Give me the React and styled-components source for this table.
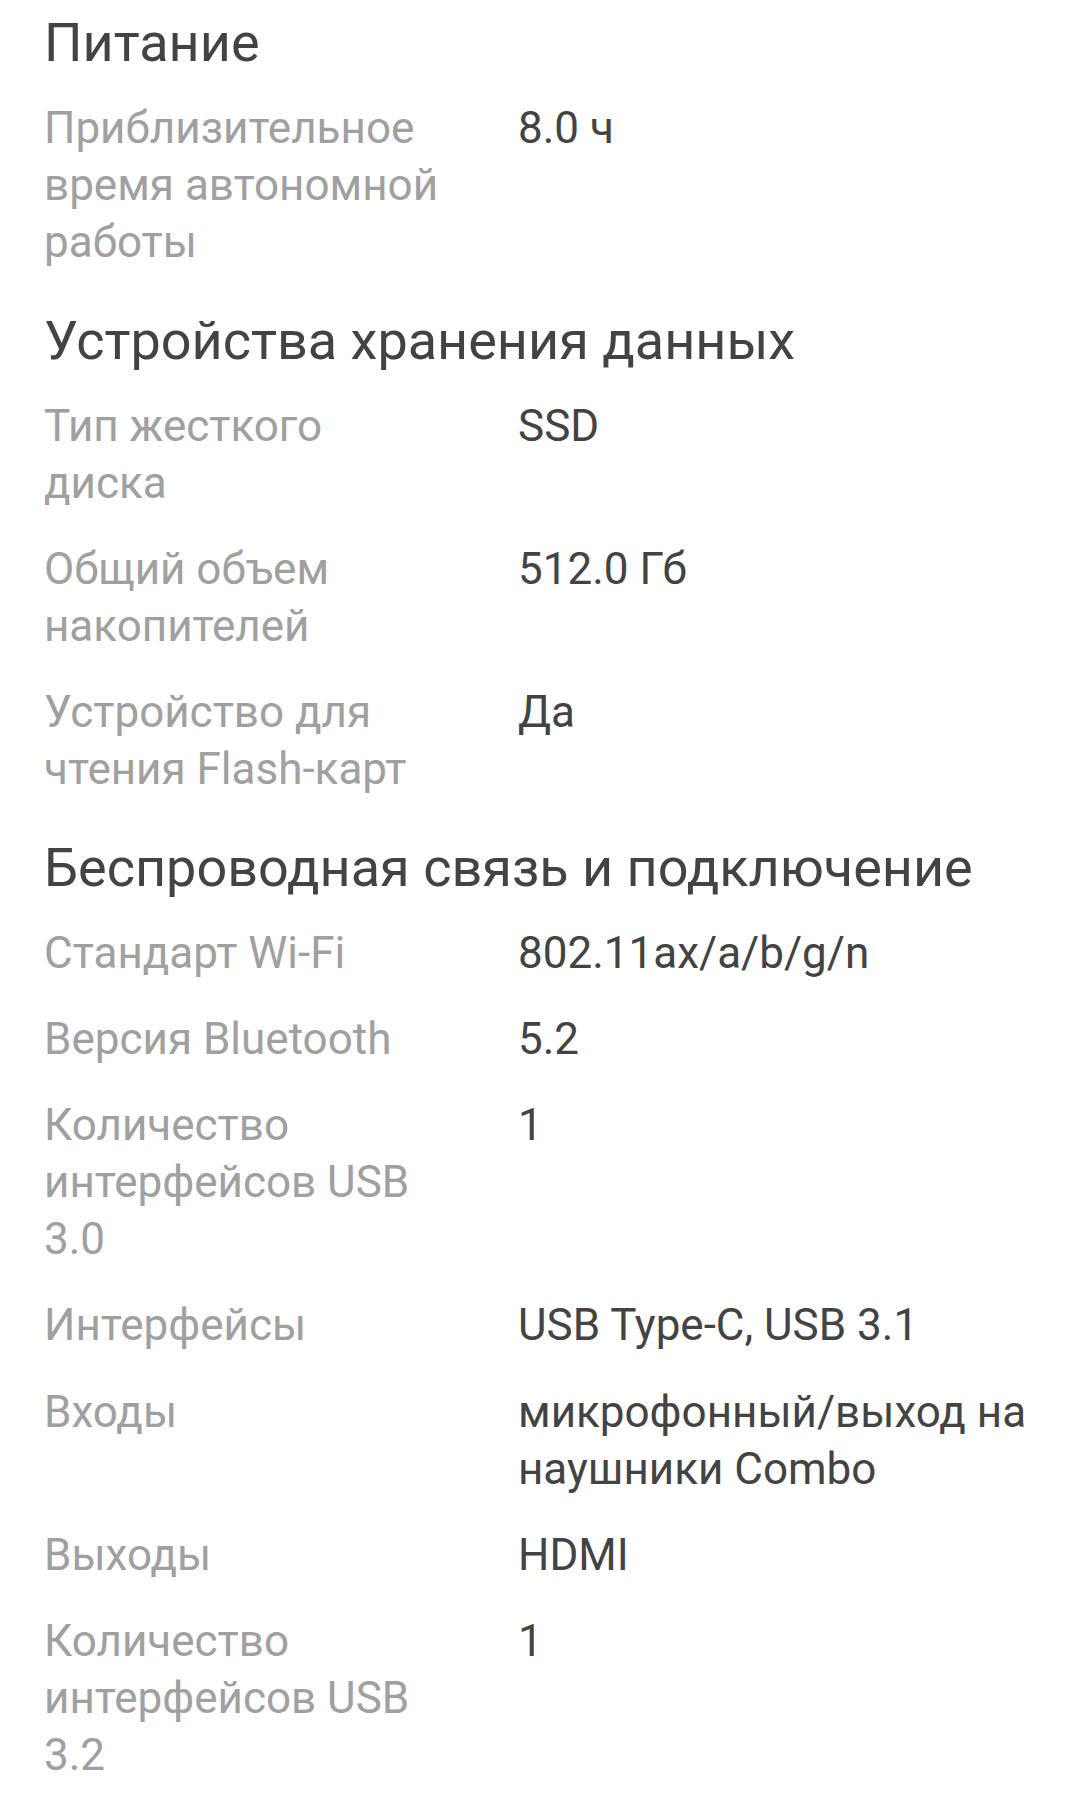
import React from "react";
import styled, { createGlobalStyle } from "styled-components";

const GlobalStyle = createGlobalStyle`
  html, body {
    margin: 0;
    padding: 0;
    background: #ffffff;
  }
  body {
    font-family: Roboto, "Noto Sans", "Liberation Sans", sans-serif;
    -webkit-font-smoothing: antialiased;
  }
`;

const Page = styled.main`
  width: 1080px;
  box-sizing: border-box;
  padding: 8px 43px 40px 44px;
  display: flex;
  flex-direction: column;
  gap: 34.5px;
  background: #ffffff;
`;

const Section = styled.section`
  display: flex;
  flex-direction: column;
`;

const Heading = styled.h2`
  margin: 0 0 22px;
  font-size: 54px;
  line-height: 70px;
  font-weight: 400;
  color: #434343;
  letter-spacing: 0;
`;

const Rows = styled.dl`
  margin: 0;
  display: flex;
  flex-direction: column;
  gap: 29.3px;
`;

const Row = styled.div`
  display: grid;
  grid-template-columns: 474px 1fr;
`;

const Label = styled.dt`
  margin: 0;
  padding-right: 68px;
  font-size: 44px;
  line-height: 57px;
  color: #a0a0a0;
`;

const Value = styled.dd`
  margin: 0;
  font-size: 44px;
  line-height: 57px;
  color: #434343;
`;

const sections = [
  {
    title: "Питание",
    rows: [["Приблизительное время автономной работы", "8.0 ч"]],
  },
  {
    title: "Устройства хранения данных",
    rows: [
      ["Тип жесткого диска", "SSD"],
      ["Общий объем накопителей", "512.0 Гб"],
      ["Устройство для чтения Flash-карт", "Да"],
    ],
  },
  {
    title: "Беспроводная связь и подключение",
    rows: [
      ["Стандарт Wi-Fi", "802.11ax/a/b/g/n"],
      ["Версия Bluetooth", "5.2"],
      ["Количество интерфейсов USB 3.0", "1"],
      ["Интерфейсы", "USB Type-C, USB 3.1"],
      ["Входы", "микрофонный/выход на наушники Combo"],
      ["Выходы", "HDMI"],
      ["Количество интерфейсов USB 3.2", "1"],
    ],
  },
];

export default function App() {
  return (
    <>
      <GlobalStyle />
      <Page>
        {sections.map((s) => (
          <Section key={s.title}>
            <Heading>{s.title}</Heading>
            <Rows>
              {s.rows.map(([label, value]) => (
                <Row key={label}>
                  <Label>{label}</Label>
                  <Value>{value}</Value>
                </Row>
              ))}
            </Rows>
          </Section>
        ))}
      </Page>
    </>
  );
}
